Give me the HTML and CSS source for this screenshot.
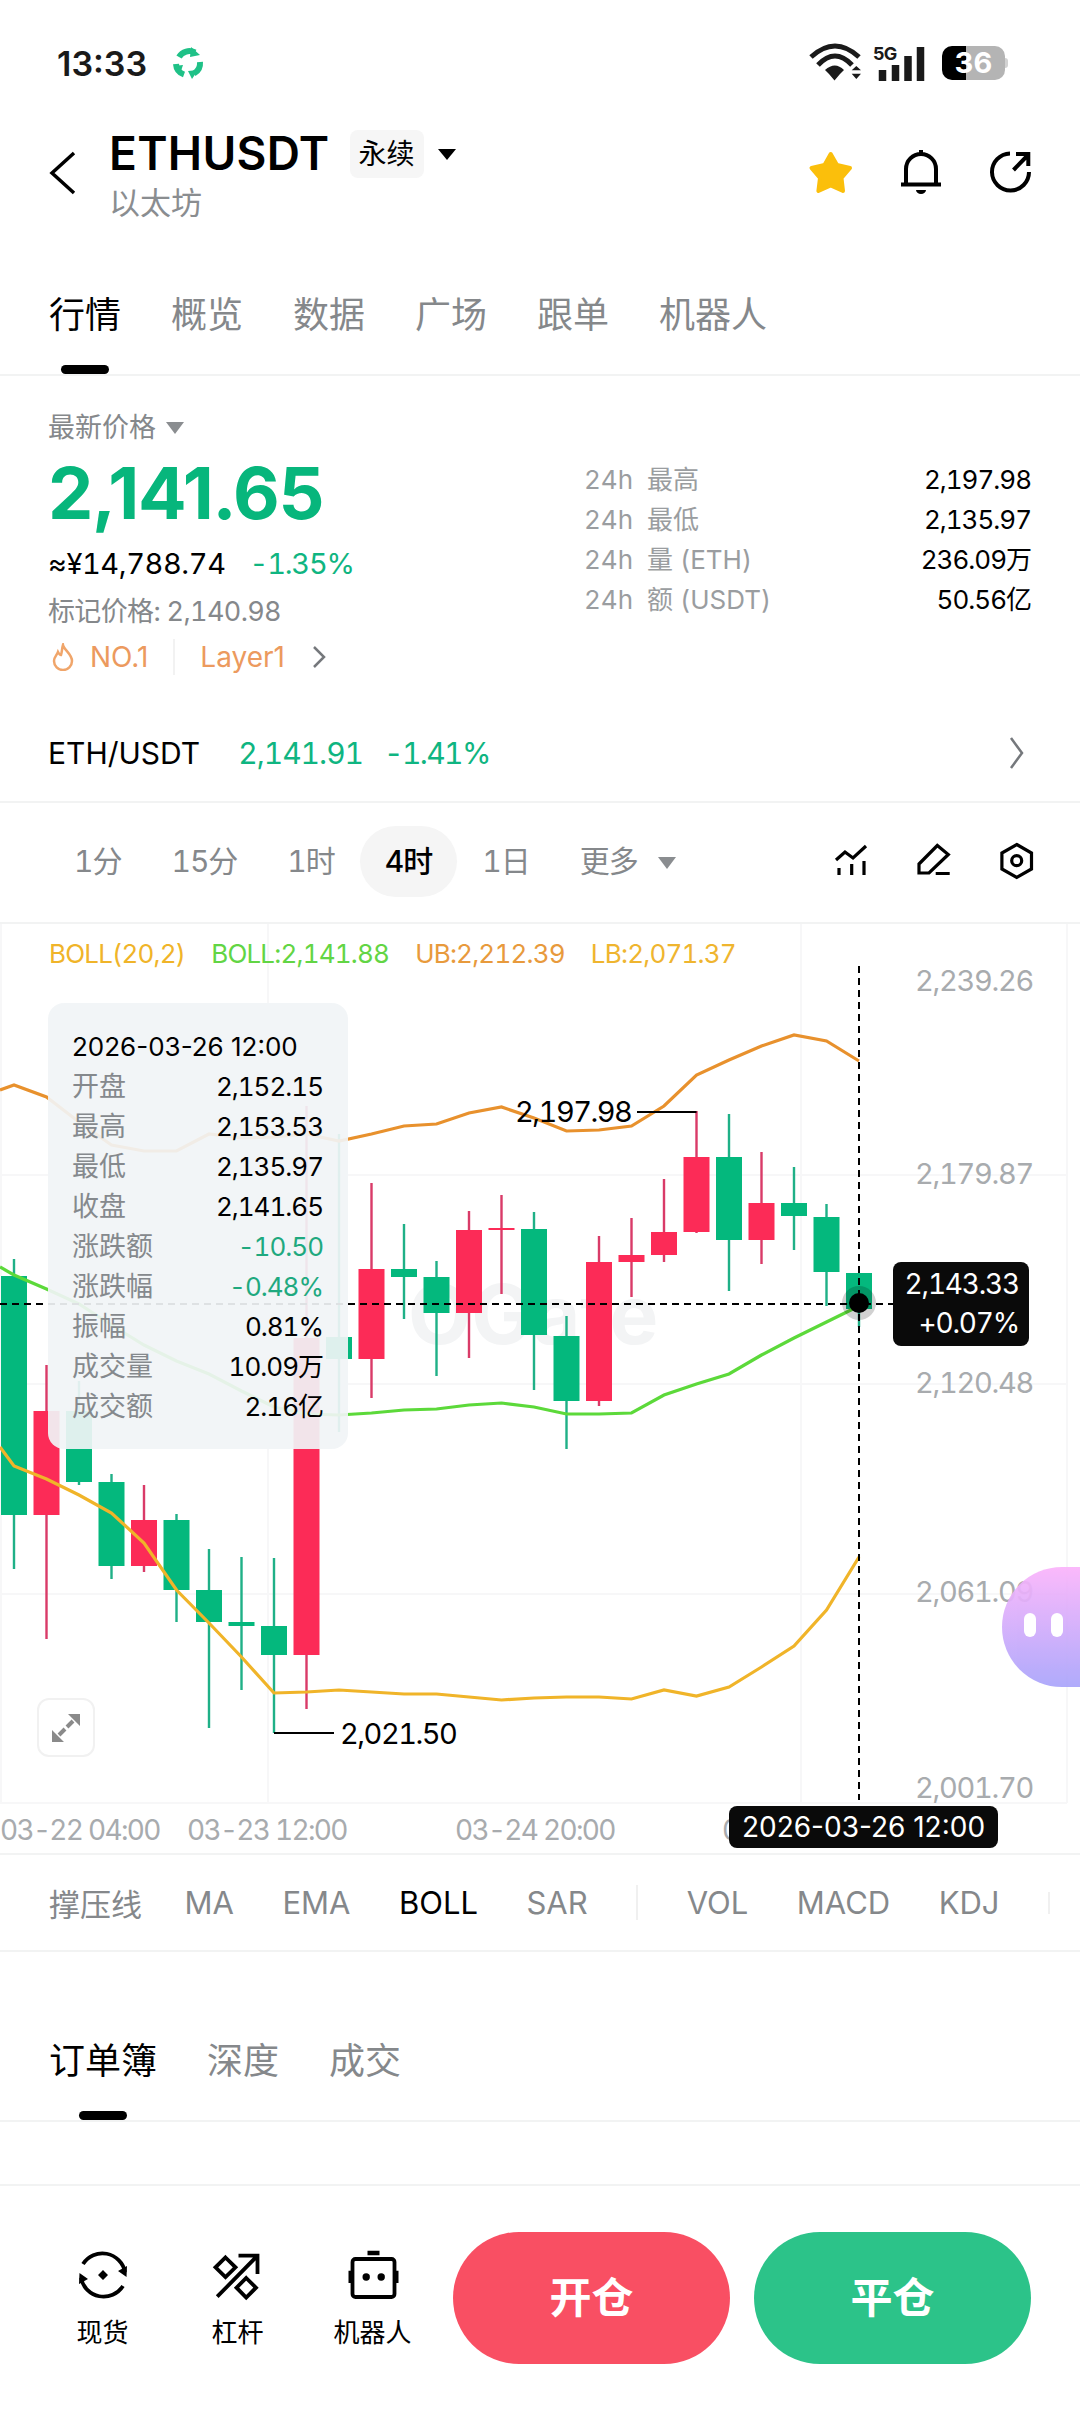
FILE: index.html
```html
<!DOCTYPE html>
<html lang="zh-CN">
<head>
    <meta charset="UTF-8">
    <meta name="viewport" content="width=device-width, initial-scale=1.0">
    <title>ETHUSDT</title>
    <link rel="stylesheet" href="styles.css">
</head>
<body>
    <!-- Barre d'état -->
    <div class="status">
        <span class="status-time">13:33</span>
        <svg class="status-app" width="34" height="34" viewBox="0 0 34 34">
            <path class="app-arc" d="M8 11A12 12 0 0 1 24 6.500M29 16A12 12 0 0 1 23 27.500M13 28.500A12 12 0 0 1 5 18"/>
            <path class="app-head" d="M20 1L29 9L19 11ZM27 24L21 33L17 25ZM9 28L3 20L12 19Z"/>
        </svg>
        <div class="status-right">
            <svg width="56" height="40" viewBox="0 0 56 40">
                <path class="wifi-arc" d="M3 14Q27 -8 51 14M10 22Q27 4 44 22"/>
                <path class="wifi-fill" d="M17 27Q27 18 36 27L32 31H21ZM21 31H32L26.500 37.500ZM43.700 27.300H53L48.300 23ZM43.700 30.700H53L48.300 36Z"/>
            </svg>
            <svg width="56" height="40" viewBox="0 0 56 40">
                <text class="five-g" x="0" y="17">5G</text>
                <path class="signal" d="M9.500 27V38M22.500 22V38M35 13V38M47.500 4V38"/>
            </svg>
            <div class="battery">36</div>
        </div>
    </div>

    <!-- En-tête -->
    <div class="header">
        <svg class="back" width="30" height="46" viewBox="0 0 30 46">
            <path d="M25 3L3 23L25 43"/>
        </svg>
        <div class="title">
            <div class="title-row">
                <span class="symbol">ETHUSDT</span>
                <span class="chip">永续</span>
                <span class="caret caret-black"></span>
            </div>
            <div class="subtitle">以太坊</div>
        </div>
        <div class="header-icons">
            <svg width="52" height="50" viewBox="0 0 52 50">
                <path class="star" d="M25.700 6L32 17L45 20L36.500 30L38 43L25.700 37.500L13.400 43L15 30L6.500 20L19.500 17Z"/>
            </svg>
            <svg width="50" height="52" viewBox="0 0 50 52">
                <path class="line-icon" d="M9 37V22A15 15 0 0 1 39 22V37M4 37.500H44M24 3V7"/>
                <path d="M19 43H29A5 4 0 0 1 19 43Z"/>
            </svg>
            <svg width="50" height="50" viewBox="0 0 50 50">
                <path class="line-icon" d="M23 5.500A18.500 18.500 0 1 0 42 24M26.500 22L41 7M29 6H41.300V18"/>
            </svg>
        </div>
    </div>

    <div class="tabs">
        <span class="tab active">行情</span>
        <span class="tab">概览</span>
        <span class="tab">数据</span>
        <span class="tab">广场</span>
        <span class="tab">跟单</span>
        <span class="tab">机器人</span>
    </div>

    <!-- Prix -->
    <div class="stats">
        <div class="stats-left">
            <div class="last-label">最新价格 <span class="caret caret-grey"></span></div>
            <div class="last-price">2,141.65</div>
            <div class="cny"><span class="cny-value">≈¥14,788.74</span><span class="green cny-change">-1.35%</span></div>
            <div class="mark">标记价格: 2,140.98</div>
            <div class="tags">
                <svg width="24" height="28" viewBox="0 0 24 28">
                    <path d="M12 2C13 7 21 11 21 18A9 9 0 0 1 3 18C3 14 6 12 7 9C8 11 9 12 10 12C11 9 11 5 12 2Z"/>
                </svg>
                <span>NO.1</span>
                <span class="tags-sep"></span>
                <span>Layer1</span>
                <svg class="chevron" width="14" height="24" viewBox="0 0 14 24">
                    <path d="M2 2L12 12L2 22"/>
                </svg>
            </div>
        </div>
        <div class="stats-right">
            <div class="stat-row"><span class="stat-label">24h&nbsp; 最高</span><span class="stat-value">2,197.98</span></div>
            <div class="stat-row"><span class="stat-label">24h&nbsp; 最低</span><span class="stat-value">2,135.97</span></div>
            <div class="stat-row"><span class="stat-label">24h&nbsp; 量 (ETH)</span><span class="stat-value">236.09万</span></div>
            <div class="stat-row"><span class="stat-label">24h&nbsp; 额 (USDT)</span><span class="stat-value">50.56亿</span></div>
        </div>
    </div>

    <div class="pair">
        <span class="pair-name">ETH/USDT</span>
        <span class="green pair-price">2,141.91</span>
        <span class="green pair-change">-1.41%</span>
        <svg class="chevron pair-chevron" width="15" height="34" viewBox="0 0 15 34">
            <path d="M2 2L13 17L2 32"/>
        </svg>
    </div>

    <!-- Périodes -->
    <div class="periods">
        <span class="period">1分</span>
        <span class="period">15分</span>
        <span class="period">1时</span>
        <span class="period active">4时</span>
        <span class="period">1日</span>
        <span class="period">更多 <span class="caret caret-grey"></span></span>
        <div class="period-icons">
            <svg width="40" height="40" viewBox="0 0 40 40">
                <path class="tool-icon" d="M5 19L14 11L22 17L35 5M8 27V34M20.700 23V34M33 20V34"/>
            </svg>
            <svg width="40" height="40" viewBox="0 0 40 40">
                <path class="tool-icon" d="M5 23L23.300 4.500L34.300 13.500L15 32H5ZM21.700 32.500H35.700"/>
            </svg>
            <svg width="40" height="40" viewBox="0 0 40 40">
                <path class="tool-icon" d="M19.700 3.500L34.500 12V28L19.700 36.500L4.900 28V12Z"/>
                <circle class="tool-icon" cx="19.700" cy="19.700" r="5"/>
            </svg>
        </div>
    </div>

    <!-- Graphique -->
    <div class="chart">
        <svg class="chart-canvas" width="1080" height="929" viewBox="0 924 1080 929">
            <path class="grid" d="M0 1175H1067M0 1384H1067M0 1594H1067M0 1803H1067M1 924V1803M268 924V1803M801 924V1803M1067 924V1803"/>
            <text class="watermark" x="408" y="1344">OGate</text>

            <text class="axis" x="1033" y="991">2,239.26</text>
            <text class="axis" x="1033" y="1184">2,179.87</text>
            <text class="axis" x="1033" y="1393">2,120.48</text>
            <text class="axis" x="1033" y="1602">2,061.09</text>
            <text class="axis" x="1033" y="1798">2,001.70</text>
            <text class="axis-time" x="0" y="1840">03-22 04:00</text>
            <text class="axis-time" x="187" y="1840">03-23 12:00</text>
            <text class="axis-time" x="455" y="1840">03-24 20:00</text>
            <text class="axis-time" x="722" y="1840">0</text>

            <path class="wick up" d="M14 1259V1569M79 1381V1485M111.500 1474V1579M176.500 1514V1622M209 1549V1728M241.500 1557V1690M274 1558V1733M339 1134V1432M404 1224V1319M436.500 1261V1376M534 1212V1390M566.500 1316V1449M729 1114V1291M794 1167V1250M826.500 1204V1306M859 1273V1327"/>
            <path class="body up" d="M14 1276V1515M79 1411V1482M111.500 1482V1566M176.500 1520V1590M209 1590V1622M241.500 1622V1626M274 1626V1655M339 1337V1359M404 1269V1277M436.500 1277V1313M534 1229V1335M566.500 1336V1401M729 1157V1240M794 1203V1216M826.500 1217V1272M859 1273V1309"/>
            <path class="wick down" d="M46.500 1365V1639M144 1485V1572M306.500 1106V1709M371.500 1183V1398M469 1211V1358M501.500 1195V1294M599 1236V1406M631.500 1218V1297M664 1179V1262M696.500 1111V1233M761.500 1152V1264"/>
            <path class="body down" d="M46.500 1411V1515M144 1520V1566M306.500 1338V1655M371.500 1269V1359M469 1230V1313M501.500 1228V1230M599 1262V1401M631.500 1255V1262M664 1232V1255M696.500 1157V1232M761.500 1203V1240"/>

            <polyline class="band band-up" points="0,1090 14,1085 46.500,1097 79,1122 111.500,1145 144,1151 176.500,1151 209,1134 241.500,1138 274,1137 306.500,1134 339,1141 371.500,1134 404,1126 436.500,1124 469,1113 501.500,1107 534,1118 566.500,1131 599,1130 631.500,1126 664,1106 696.500,1075 729,1060 761.500,1046 794,1035 826.500,1041 859,1061"/>
            <polyline class="band band-mid" points="0,1267 14,1275 46.500,1289 79,1304 111.500,1325 144,1345 176.500,1361 209,1374 241.500,1391 274,1407 306.500,1414 339,1415 371.500,1413 404,1410 436.500,1409 469,1405 501.500,1403 534,1407 566.500,1414 599,1414 631.500,1413 664,1395 696.500,1384 729,1374 761.500,1355 794,1338 826.500,1322 859,1306"/>
            <polyline class="band band-low" points="0,1447 14,1466 46.500,1479 79,1495 111.500,1513 144,1543 176.500,1590 209,1623 241.500,1657 274,1693 306.500,1692 339,1690 371.500,1692 404,1694 436.500,1694 469,1697 501.500,1700 534,1698 566.500,1697 599,1697 631.500,1699 664,1690 696.500,1696 729,1687 761.500,1667 794,1646 826.500,1610 859,1557"/>

            <path class="marker" d="M637 1112H696.500M274 1733H334"/>
            <text class="marker-text" x="515" y="1122">2,197.98</text>
            <text class="marker-text" x="340" y="1744">2,021.50</text>

            <path class="cross" d="M0 1304H893M859 966V1800"/>
            <circle class="dot-halo" cx="859" cy="1303" r="17"/>
            <circle cx="859" cy="1303" r="10"/>
        </svg>

        <div class="legend">
            <span class="legend-params">BOLL(20,2)</span>
            <span class="legend-mid">BOLL:2,141.88</span>
            <span class="legend-up">UB:2,212.39</span>
            <span class="legend-low">LB:2,071.37</span>
        </div>

        <div class="tooltip">
            <div class="tooltip-date">2026-03-26 12:00</div>
            <div class="tooltip-row"><span>开盘</span><b>2,152.15</b></div>
            <div class="tooltip-row"><span>最高</span><b>2,153.53</b></div>
            <div class="tooltip-row"><span>最低</span><b>2,135.97</b></div>
            <div class="tooltip-row"><span>收盘</span><b>2,141.65</b></div>
            <div class="tooltip-row"><span>涨跌额</span><b class="tooltip-green">-10.50</b></div>
            <div class="tooltip-row"><span>涨跌幅</span><b class="tooltip-green">-0.48%</b></div>
            <div class="tooltip-row"><span>振幅</span><b>0.81%</b></div>
            <div class="tooltip-row"><span>成交量</span><b>10.09万</b></div>
            <div class="tooltip-row"><span>成交额</span><b>2.16亿</b></div>
        </div>

        <div class="price-tag">2,143.33<br>+0.07%</div>
        <div class="date-tag">2026-03-26 12:00</div>

        <div class="expand">
            <svg width="30" height="30" viewBox="0 0 30 30">
                <path class="expand-icon" d="M17 1H29V13ZM1 17V29H13Z"/>
                <path class="expand-line" d="M22 8L16 14M14 16L8 22"/>
            </svg>
        </div>

        <div class="bubble"><span class="eye"></span><span class="eye"></span></div>
    </div>

    <div class="indicators">
        <span class="indicators-first">撑压线</span>
        <span>MA</span>
        <span>EMA</span>
        <span class="active">BOLL</span>
        <span>SAR</span>
        <span class="indicators-sep"></span>
        <span>VOL</span>
        <span>MACD</span>
        <span>KDJ</span>
        <span class="indicators-sep faint"></span>
    </div>

    <div class="tabs tabs-book">
        <span class="tab active">订单簿</span>
        <span class="tab">深度</span>
        <span class="tab">成交</span>
    </div>

    <div class="spacer"></div>

    <!-- Barre du bas -->
    <div class="bottom">
        <div class="shortcut">
            <svg width="60" height="60" viewBox="0 0 60 60">
                <path class="short-icon" d="M10 19A23 23 0 0 1 52 27M50 41A23 23 0 0 1 8 33"/>
                <path d="M53.500 32L45 26L54 21ZM6.500 28L15 34L6 39ZM30 25L35 30L30 35L25 30Z"/>
            </svg>
            <span>现货</span>
        </div>
        <div class="shortcut">
            <svg width="60" height="60" viewBox="0 0 60 60">
                <g transform="translate(2.500 5)">
                    <path class="short-icon" d="M15 7.500L25 17.300L15 27L5 17.300ZM35.700 28L45.500 37.700L35.700 47.500L26 37.700ZM6.700 46.700L46 6.700M28 5.700H47V24"/>
                </g>
            </svg>
            <span>杠杆</span>
        </div>
        <div class="shortcut">
            <svg width="60" height="60" viewBox="0 0 60 60">
                <g transform="translate(2.500 3)">
                    <rect class="short-icon" x="7" y="11" width="42" height="38" rx="3"/>
                    <path d="M22 2.700H34V7.300H22ZM3 22.700H6.700V35H3ZM49.300 22.700H53V35H49.300Z"/>
                    <circle cx="20.700" cy="29" r="3.700"/>
                    <circle cx="35.700" cy="29" r="3.700"/>
                </g>
            </svg>
            <span>机器人</span>
        </div>
        <div class="action action-open">开仓</div>
        <div class="action action-close">平仓</div>
    </div>
</body>
</html>
```

FILE: styles.css
```css
* {
    box-sizing: border-box;
}
body {
    margin: 0;
    width: 1080px;
    height: 2412px;
    overflow: hidden;
    background: #fff;
    color: #000;
    font-family: Inter, "Noto Sans CJK SC", sans-serif;
    font-variant-numeric: tabular-nums;
    display: flex;
    flex-direction: column;
}
svg {
    display: block;
    flex: none;
}
.green {
    color: #0fb581;
}

/* Triangles */
.caret {
    display: inline-block;
    width: 0;
    height: 0;
    border-left: 9px solid transparent;
    border-right: 9px solid transparent;
}
.caret-black {
    border-top: 11px solid #000;
    margin-left: 14px;
}
.caret-grey {
    border-top: 12px solid #8a8d90;
    vertical-align: 3px;
    margin-left: 3px;
}
.period .caret-grey {
    margin-left: 13px;
}

/* Barre d'état */
.status {
    height: 126px;
    padding: 0 0 0 57px;
    display: flex;
    align-items: center;
}
.status-time {
    font-size: 34px;
    font-weight: 600;
    color: #1a1a1a;
    font-variant-numeric: normal;
}
.status-app {
    margin-left: 24px;
}
.app-arc {
    fill: none;
    stroke: #1fc187;
    stroke-width: 6;
}
.app-head {
    fill: #1fc187;
}
.status-right {
    margin-left: auto;
    padding-right: 75px;
    display: flex;
    align-items: center;
    gap: 9px;
}
.wifi-arc {
    fill: none;
    stroke: #1a1a1a;
    stroke-width: 5;
}
.wifi-fill {
    fill: #1a1a1a;
}
.five-g {
    font-size: 18px;
    font-weight: 700;
    letter-spacing: -1px;
    fill: #1a1a1a;
}
.signal {
    fill: none;
    stroke: #1a1a1a;
    stroke-width: 7.500;
}
.battery {
    position: relative;
    width: 63px;
    height: 34px;
    margin-left: 4px;
    border-radius: 10px;
    background: linear-gradient(90deg, #000 38%, #b4b4b4 38%);
    color: #fff;
    font-size: 29px;
    font-weight: 700;
    line-height: 34px;
    text-align: center;
}
.battery::after {
    content: "";
    position: absolute;
    right: -3px;
    top: 12px;
    width: 3px;
    height: 10px;
    border-radius: 0 3px 3px 0;
    background: #d2d2d2;
}

/* En-tête */
.header {
    height: 110px;
    padding: 6px 49px 15px 49px;
    display: flex;
    align-items: center;
}
.back {
    margin-bottom: 8px;
}
.back path {
    fill: none;
    stroke: #000;
    stroke-width: 3.500;
}
.title {
    margin-left: 30px;
}
.title-row {
    height: 48px;
    display: flex;
    align-items: center;
}
.symbol {
    font-size: 46px;
    font-weight: 600;
    letter-spacing: 0.300px;
    margin-bottom: 3px;
}
.chip {
    margin-left: 20px;
    width: 74px;
    height: 48px;
    border-radius: 8px;
    background: #f6f6f6;
    font-size: 28px;
    line-height: 48px;
    text-align: center;
}
.subtitle {
    margin-top: 5px;
    font-size: 31px;
    line-height: 40px;
    color: #8a8d90;
}
.header-icons {
    margin-left: auto;
    margin-right: -6px;
    margin-bottom: 8px;
    display: flex;
    align-items: center;
    gap: 40px;
}
.star {
    fill: #fbbf0b;
    stroke: #fbbf0b;
    stroke-width: 4;
    stroke-linejoin: round;
}
.line-icon {
    fill: none;
    stroke: #000;
    stroke-width: 4;
}

/* Onglets */
.tabs {
    display: flex;
    gap: 50px;
    padding: 61px 0 0 49px;
    border-bottom: 2px solid #f2f3f3;
}
.tab {
    position: relative;
    font-size: 36px;
    line-height: 36px;
    padding-bottom: 41px;
    color: #85888b;
}
.tab.active {
    color: #000;
}
.tab.active::after {
    content: "";
    position: absolute;
    left: 50%;
    bottom: 0;
    width: 48px;
    height: 9px;
    margin-left: -24px;
    border-radius: 5px;
    background: #000;
}
.tabs-book {
    padding-top: 91px;
}

/* Prix */
.stats {
    height: 326px;
    padding: 38px 49px 0 48px;
    display: flex;
}
.stats-left {
    width: 536px;
}
.last-label {
    font-size: 27px;
    line-height: 28px;
    color: #85888b;
}
.last-price {
    margin-top: 15px;
    font-size: 72px;
    line-height: 72px;
    font-weight: 700;
    font-variant-numeric: normal;
    letter-spacing: -1.300px;
    color: #07b67c;
}
.cny {
    margin-top: 17px;
    font-size: 29px;
    line-height: 36px;
    display: flex;
    gap: 24px;
}
.cny-value {
    letter-spacing: -0.400px;
}
.cny-change {
    letter-spacing: -1.200px;
}
.mark {
    margin-top: 14px;
    font-size: 27px;
    line-height: 32px;
    letter-spacing: -0.650px;
    color: #85888b;
}
.tags {
    margin-top: 13px;
    height: 32px;
    font-size: 28px;
    font-variant-numeric: normal;
    color: #ec9a5e;
    display: flex;
    align-items: center;
}
.tags svg:first-child {
    margin-left: 3px;
    margin-right: 15px;
}
.tags svg:first-child path {
    fill: none;
    stroke: #f0a56a;
    stroke-width: 2.500;
}
.tags-sep {
    width: 2px;
    height: 36px;
    margin: 0 25px 0 25px;
    background: #f2f2f2;
}
.chevron path {
    fill: none;
    stroke: #75787c;
    stroke-width: 2.500;
}
.tags .chevron {
    margin-left: 27px;
}
.stats-right {
    flex: 1;
    padding-top: 46px;
}
.stat-row {
    height: 40px;
    display: flex;
    justify-content: space-between;
    align-items: center;
    font-size: 26px;
    line-height: 40px;
}
.stat-label {
    color: #9a9da0;
}
.stat-value {
    letter-spacing: -1px;
}

/* Paire spot */
.pair {
    height: 101px;
    padding: 3px 56px 0 48px;
    border-bottom: 2px solid #f2f3f3;
    display: flex;
    align-items: center;
    gap: 25px;
    font-size: 30px;
}
.pair-name {
    margin-right: 13px;
}
.pair-price {
    letter-spacing: -1px;
}
.pair-change {
    margin-left: -4px;
    letter-spacing: -1.600px;
}
.pair-chevron {
    margin-left: auto;
}

/* Périodes */
.periods {
    height: 121px;
    padding: 0 43px 3px 49px;
    border-bottom: 2px solid #f2f3f3;
    display: flex;
    align-items: center;
}
.period {
    height: 71px;
    padding: 0 25px;
    border-radius: 36px;
    font-size: 30px;
    line-height: 71px;
    letter-spacing: -1px;
    color: #85888b;
}
.period.active {
    color: #000;
    background: #f5f5f5;
    font-weight: 500;
}
.period-icons {
    margin-left: auto;
    display: flex;
    gap: 43px;
}
.tool-icon {
    fill: none;
    stroke: #000;
    stroke-width: 3.200;
}

/* Graphique */
.chart {
    position: relative;
    height: 931px;
    flex: none;
    border-bottom: 2px solid #f2f3f3;
}
.chart-canvas {
    position: absolute;
    left: 0;
    top: 0;
}
.grid {
    fill: none;
    stroke: #f7f7f8;
    stroke-width: 2;
}
.watermark {
    font-size: 82px;
    font-weight: 700;
    fill: #f3f4f5;
}
.axis {
    font-size: 29px;
    letter-spacing: -1.300px;
    fill: #a8abae;
    text-anchor: end;
}
.axis-time {
    font-size: 28px;
    letter-spacing: -1.700px;
    fill: #a8abae;
}
.wick {
    fill: none;
    stroke-width: 2.400;
}
.body {
    fill: none;
    stroke-width: 26;
}
.up {
    stroke: #04b87d;
}
.down {
    stroke: #fc2b57;
}
.wick.up {
    stroke: #1fb087;
}
.wick.down {
    stroke: #d93b68;
}
.band {
    fill: none;
    stroke-width: 3.200;
}
.band-up {
    stroke: #e8912d;
}
.band-mid {
    stroke: #5cd93a;
}
.band-low {
    stroke: #f0b429;
}
.marker {
    fill: none;
    stroke: #000;
    stroke-width: 2;
}
.marker-text {
    font-size: 29px;
    letter-spacing: -1.500px;
}
.cross {
    fill: none;
    stroke: #000;
    stroke-width: 2;
    stroke-dasharray: 7 5;
}
.dot-halo {
    fill: rgba(0, 0, 0, 0.18);
}
.legend {
    position: relative;
    padding: 16px 0 0 49px;
    display: flex;
    gap: 26px;
    font-size: 26px;
    line-height: 28px;
    letter-spacing: -0.800px;
}
.legend-params {
    color: #f0b429;
}
.legend-mid {
    color: #62d544;
}
.legend-up {
    color: #e89a3c;
}
.legend-low {
    color: #efb52f;
}

/* Infobulle */
.tooltip {
    position: absolute;
    left: 48px;
    top: 79px;
    width: 300px;
    height: 446px;
    padding: 24px 25px 0 24px;
    border-radius: 16px;
    background: rgba(241, 244, 246, 0.92);
    font-size: 26px;
    line-height: 40px;
}
.tooltip-date {
    font-variant-numeric: normal;
}
.tooltip-row {
    display: flex;
    justify-content: space-between;
    color: #85898d;
}
.tooltip-row span {
    font-size: 27px;
}
.tooltip-row b {
    font-weight: 400;
    letter-spacing: -1px;
    color: #000;
}
.tooltip-row b.tooltip-green {
    color: #1fa97f;
}
.price-tag {
    position: absolute;
    left: 893px;
    top: 338px;
    width: 136px;
    height: 84px;
    padding: 3px 10px 0 0;
    border-radius: 8px;
    background: #0a0a0a;
    color: #fff;
    font-size: 28px;
    line-height: 39px;
    letter-spacing: -1.200px;
    text-align: right;
}
.date-tag {
    position: absolute;
    left: 729px;
    top: 882px;
    width: 269px;
    height: 42px;
    border-radius: 8px;
    background: #0a0a0a;
    color: #fff;
    font-size: 28px;
    font-variant-numeric: normal;
    line-height: 42px;
    text-align: center;
}
.expand {
    position: absolute;
    left: 37px;
    top: 774px;
    width: 58px;
    height: 59px;
    border: 2px solid #f1f1f1;
    border-radius: 12px;
    display: flex;
    align-items: center;
    justify-content: center;
}
.expand-icon {
    fill: #8a8a8a;
}
.expand-line {
    fill: none;
    stroke: #8a8a8a;
    stroke-width: 4;
}
.bubble {
    position: absolute;
    right: 0;
    top: 643px;
    width: 78px;
    height: 120px;
    padding: 46px 0 0 22px;
    border-radius: 60px 0 0 60px;
    background: linear-gradient(180deg, #fbb4fb, #a9a4fb);
    opacity: 0.92;
    display: flex;
    gap: 15px;
}
.eye {
    width: 12px;
    height: 24px;
    border-radius: 6px;
    background: #fff;
}

/* Indicateurs */
.indicators {
    height: 97px;
    flex: none;
    padding-left: 49px;
    border-bottom: 2px solid #f2f3f3;
    display: flex;
    align-items: center;
    gap: 48.500px;
    font-size: 31px;
    color: #85888b;
}
.indicators-first {
    margin-right: -6px;
}
.indicators .active {
    color: #000;
}
.indicators-sep {
    width: 2px;
    height: 35px;
    background: #f0f0f0;
}
.indicators-sep.faint {
    height: 22px;
}

.spacer {
    height: 64px;
    border-bottom: 2px solid #f2f3f3;
    flex: none;
}

/* Barre du bas */
.bottom {
    padding: 46px 48px 0 35px;
    display: flex;
}
.shortcut {
    width: 135px;
    padding-top: 13px;
    display: flex;
    flex-direction: column;
    align-items: center;
    gap: 13px;
    font-size: 26px;
    line-height: 30px;
}
.short-icon {
    fill: none;
    stroke: #000;
    stroke-width: 3.800;
}
.action {
    width: 277px;
    height: 132px;
    border-radius: 66px;
    color: #fff;
    font-size: 42px;
    font-weight: 700;
    line-height: 132px;
    text-align: center;
}
.action-open {
    margin-left: 13px;
    background: #f94f63;
}
.action-close {
    margin-left: 24px;
    background: #2cc389;
}
```
